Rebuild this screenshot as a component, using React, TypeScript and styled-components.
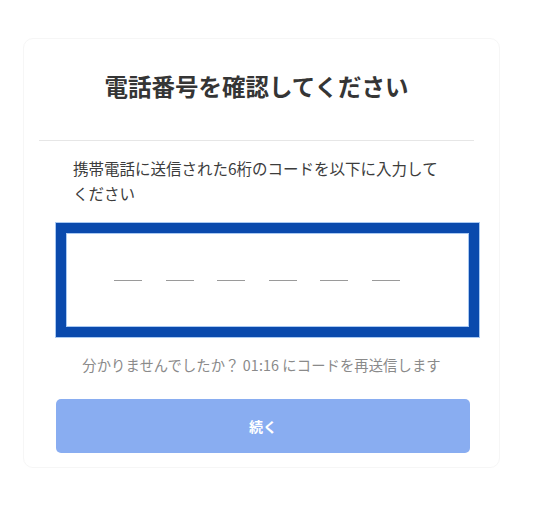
import React from 'react';
import styled, { createGlobalStyle } from 'styled-components';

const GlobalStyle = createGlobalStyle`
  body {
    margin: 0;
    background: #ffffff;
    font-family: "Noto Sans CJK JP", "Noto Sans", "Liberation Sans", sans-serif;
  }
`;

const Page = styled.div`
  padding: 38px 0 0 23px;
`;

const Card = styled.div`
  width: 477px;
  height: 430px;
  box-sizing: border-box;
  border: 1px solid #f6f6f6;
  border-radius: 10px;
  background: #fff;
  display: flex;
  flex-direction: column;
`;

const Title = styled.h1`
  margin: 31px 10px 0 0;
  font-size: 23.5px;
  line-height: 32px;
  font-weight: 700;
  color: #353535;
  text-align: center;
`;

const Divider = styled.hr`
  margin: 38px 25px 0 15px;
  border: none;
  border-top: 1px solid #e6e6e6;
  height: 0;
`;

const Description = styled.p`
  margin: 15px 0 0 49px;
  width: 378px;
  font-size: 15.5px;
  line-height: 25px;
  color: #3c3c3c;
`;

const CodeBox = styled.div`
  margin: 17px 20px 0 32px;
  height: 114px;
  box-sizing: border-box;
  border: 10px solid #0a4aad;
  box-shadow: 0 0 0 1px #a9c9f2, inset 0 0 0 1px #a9c9f2;
  background: #fff;
  display: flex;
  align-items: center;
  padding: 1px 0 0 48px;
  gap: 23.5px;
`;

const Dash = styled.span`
  width: 28px;
  height: 1px;
  background: #9a9a9a;
`;

const Resend = styled.p`
  margin: 18px 0 0;
  font-size: 14.3px;
  line-height: 20px;
  color: #8a8a8a;
  text-align: center;
  letter-spacing: 0.1px;
`;

const ContinueButton = styled.button`
  margin: 24px 29px 0 32px;
  height: 54px;
  border: none;
  border-radius: 5px;
  background: #89adf1;
  color: #fff;
  font-family: inherit;
  font-size: 14px;
  font-weight: 700;
`;

const App: React.FC = () => {
  const digits = [0, 1, 2, 3, 4, 5];
  return (
    <Page>
      <GlobalStyle />
      <Card>
        <Title>電話番号を確認してください</Title>
        <Divider />
        <Description>携帯電話に送信された6桁のコードを以下に入力してください</Description>
        <CodeBox>
          {digits.map((d) => (
            <Dash key={d} />
          ))}
        </CodeBox>
        <Resend>分かりませんでしたか？ 01:16 にコードを再送信します</Resend>
        <ContinueButton>続く</ContinueButton>
      </Card>
    </Page>
  );
};

export default App;
